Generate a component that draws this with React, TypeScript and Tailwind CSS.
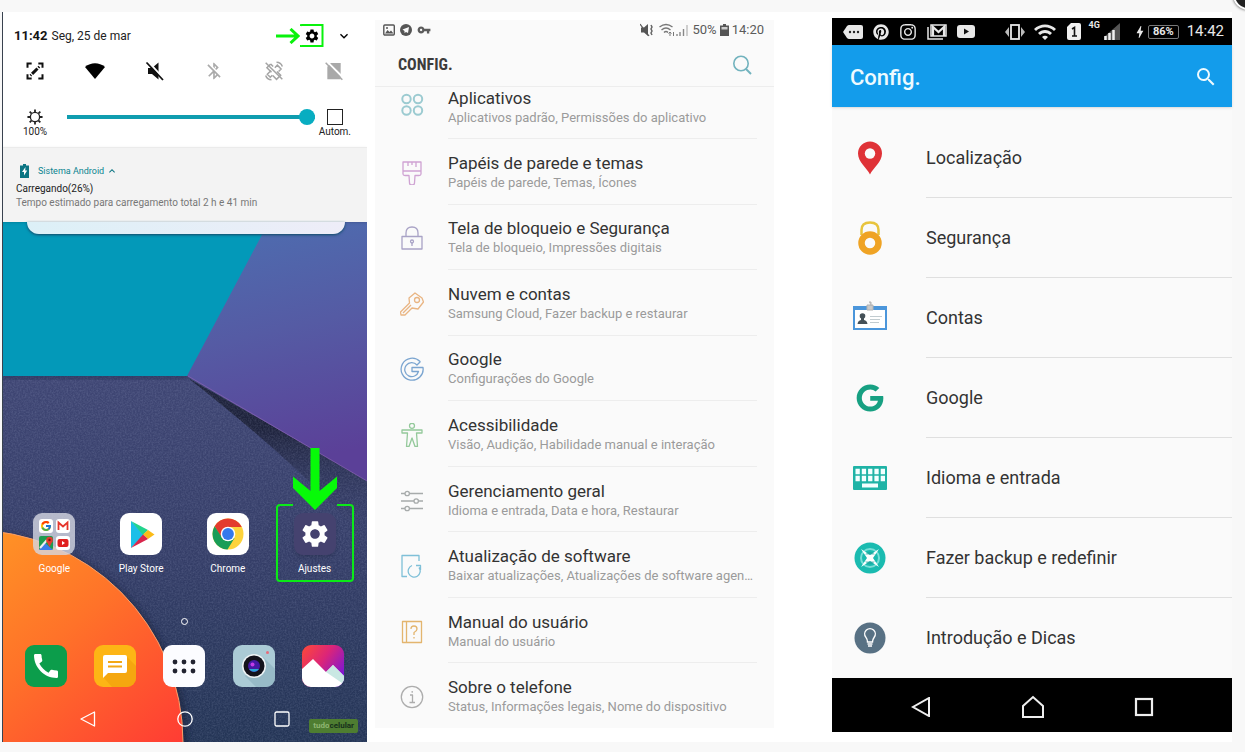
import type { ReactNode } from "react";
import { FcGoogle } from "react-icons/fc";
import { FaGoogle, FaPinterest, FaInstagram } from "react-icons/fa";
import {
  MdBluetoothDisabled,
  MdBolt,
  MdCall,
  MdExpandLess,
  MdExpandMore,
  MdSearch,
  MdSettings,
  MdVpnKey,
  MdWifi,
} from "react-icons/md";

/* ---------- Home screen with notification shade ---------- */

function Wallpaper() {
  return (
    <svg className="absolute inset-0 h-full w-full" viewBox="0 0 365 730" preserveAspectRatio="none" aria-hidden="true">
      <defs>
        <linearGradient id="navy" x1="0" y1="0" x2="0" y2="1">
          <stop offset="0.5" stopColor="#3f4674" />
          <stop offset="0.75" stopColor="#353e68" />
          <stop offset="1" stopColor="#243556" />
        </linearGradient>
        <linearGradient id="violet" x1="0" y1="0" x2="0.15" y2="1">
          <stop offset="0" stopColor="#4c70b2" />
          <stop offset="0.5" stopColor="#555ba4" />
          <stop offset="1" stopColor="#5b4098" />
        </linearGradient>
        <linearGradient id="fold" x1="0" y1="0.3" x2="0" y2="1">
          <stop offset="0" stopColor="#1e233c" />
          <stop offset="1" stopColor="#373f69" stopOpacity="0" />
        </linearGradient>
        <linearGradient id="sunset" x1="0.4" y1="0" x2="0.9" y2="0.6">
          <stop offset="0" stopColor="#ff9f24" />
          <stop offset="0.5" stopColor="#ff7229" />
          <stop offset="1" stopColor="#ff3a34" />
        </linearGradient>
        <filter id="grain" x="0" y="0" width="100%" height="100%">
          <feTurbulence type="fractalNoise" baseFrequency="0.6" numOctaves="2" seed="4" />
          <feColorMatrix values="0 0 0 0 0.65  0 0 0 0 0.72  0 0 0 0 0.95  0.9 0 0 0 -0.3" />
        </filter>
        <filter id="soft" x="-10%" y="-10%" width="120%" height="120%">
          <feGaussianBlur stdDeviation="3" />
        </filter>
      </defs>
      <rect width="365" height="730" fill="url(#navy)" />
      <path d="M186 366 L365 468 L365 530 Q300 455 186 366Z" fill="url(#fold)" />
      <rect y="364" width="365" height="366" filter="url(#grain)" opacity="0.28" />
      <rect y="361" width="186" height="6" fill="#1f2a50" opacity="0.6" filter="url(#soft)" />
      <path d="M0 200 H276 L186 364 H0Z" fill="#0399b9" />
      <path d="M272 200 H365 V469 L185 364Z" fill="url(#violet)" />
      <path d="M186 364 L365 469" stroke="#8a62b4" strokeWidth="1" opacity="0.7" />
      <circle cx="-28" cy="733" r="214" fill="#151c34" opacity="0.5" filter="url(#soft)" />
      <circle cx="-31" cy="730" r="212" fill="url(#sunset)" stroke="#f7a06a" strokeWidth="1" />
    </svg>
  );
}

function CaptureIcon() {
  return (
    <svg className="size-5" viewBox="0 0 24 24" fill="none" stroke="#111" strokeWidth="2.4">
      <path d="M3 8V3h5M16 3h5v5M21 16v5h-5M8 21H3v-5" />
      <path d="M8.5 15.5 15 9" strokeWidth="3.6" />
      <path d="M16 8l1.2-1.2M6.5 17.5l1-1" strokeWidth="3" />
    </svg>
  );
}

function WifiFan() {
  return (
    <svg className="size-5" viewBox="0 0 20 20">
      <path d="M0 6 C6 1 14 1 20 6 L10 18Z" fill="#000" />
    </svg>
  );
}

function SoundOff() {
  return (
    <svg className="size-5" viewBox="0 0 20 20">
      <path d="M3 7H7L13.500 1.500V18.500L7 13H3Z" fill="#111" />
      <path d="M3 0.500 20 19" stroke="#fff" strokeWidth="2" />
      <path d="M1.500 1.500 18 19" stroke="#111" strokeWidth="1.800" />
    </svg>
  );
}

function RotationOff() {
  return (
    <svg className="size-5" viewBox="0 0 24 24" fill="none" stroke="#a4a4a4" strokeWidth="1.8">
      <path d="M8 3.5 3.5 8 9 13.500M11 6.500 8 3.500M13 8l3-3 4.500 4.500-3 3M10.500 17.500 15 22l5-5-4.500-4.500M8.500 11.500 4 16l3.500 3.500 2.500-2.500" />
      <path d="M2 2l20 20M15 1.500c3.500 0 6 2 7 5M9 22.500c-3.500 0-6-2-7-5" />
    </svg>
  );
}

function SimOff() {
  return (
    <svg className="size-5" viewBox="0 0 24 24">
      <path d="M8 2.500H20V22H4V7Z" fill="#a9a9a9" />
      <path d="M4 1 24 21" stroke="#fff" strokeWidth="2.400" />
      <path d="M2 2 22 22.500" stroke="#a9a9a9" strokeWidth="1.800" />
    </svg>
  );
}

function SunIcon() {
  return (
    <svg className="size-4" viewBox="0 0 18 18" fill="none" stroke="#222" strokeWidth="1.500">
      <circle cx="9" cy="9" r="5.200" />
      <path d="M9 0.500v3M9 14.500v3M0.500 9h3M14.500 9h3M3 3l2 2M13 13l2 2M3 15l2-2M13 5l2-2" strokeWidth="2" />
    </svg>
  );
}

function NotificationShade() {
  return (
    <div className="relative">
      <div className="h-[135px] bg-white pt-3">
        <div className="flex h-6 items-center pr-[15px] pl-3">
          <span className="text-[13px] font-bold text-[#151515]">11:42</span>
          <span className="ml-1 text-xs text-[#222]">Seg, 25 de mar</span>
          <div className="ml-auto flex items-center">
            <svg className="h-4 w-6" viewBox="0 0 24 16" fill="none" stroke="#09f20c" strokeWidth="3">
              <path d="M0 8H22M14.500 1 22 8l-7.500 7" />
            </svg>
            <button type="button" aria-label="Ajustes" className="relative flex size-6 items-center justify-center text-black">
              <MdSettings className="size-4" />
              <svg className="absolute inset-0 size-6" viewBox="0 0 24 24" fill="none" stroke="#09f20c" strokeWidth="2">
                <path d="M0 2 Q0 1 2 1H22.500V22H2Q0 22.500 0 21" />
              </svg>
            </button>
            <button type="button" aria-label="Expandir" className="ml-3 text-black">
              <MdExpandMore className="size-4" />
            </button>
          </div>
        </div>
        <div className="mt-[13px] flex items-center justify-between px-[23px]">
          <button type="button" aria-label="Captura"><CaptureIcon /></button>
          <button type="button" aria-label="Wi-Fi"><WifiFan /></button>
          <button type="button" aria-label="Som"><SoundOff /></button>
          <button type="button" aria-label="Bluetooth"><MdBluetoothDisabled className="size-5 text-[#aaa]" /></button>
          <button type="button" aria-label="Rotação"><RotationOff /></button>
          <button type="button" aria-label="Dados móveis"><SimOff /></button>
        </div>
        <div className="mt-7 flex items-start pr-4 pl-[17px]">
          <div className="flex w-8 flex-col items-center gap-px">
            <SunIcon />
            <span className="text-[10px] leading-3 text-[#222]">100%</span>
          </div>
          <input
            type="range"
            aria-label="Brilho"
            defaultValue={100}
            className="mr-1 ml-4 h-4 min-w-0 flex-1 appearance-none bg-[linear-gradient(#0f9daf,#0f9daf)] bg-[length:100%_4px] bg-center bg-no-repeat [&::-webkit-slider-thumb]:size-4 [&::-webkit-slider-thumb]:appearance-none [&::-webkit-slider-thumb]:rounded-full [&::-webkit-slider-thumb]:bg-[#08adc1]"
          />
          <label className="flex flex-col items-center gap-px">
            <input type="checkbox" className="size-4 appearance-none border border-[#222] bg-white" />
            <span className="text-[10px] leading-3 text-[#222]">Autom.</span>
          </label>
        </div>
      </div>
      <div className="h-[75px] border-t border-[#ebebeb] bg-[#f3f3f3] pt-4 pl-[14px] shadow">
        <div className="flex items-center">
          <svg className="ml-1 h-[14px] w-[9px]" viewBox="0 0 9 14">
            <path d="M3 0h3v1.500h3V14H0V1.500h3Z" fill="#0b7583" />
            <path d="M5.500 3 2 8h2v3.500L7.200 6.500H5.200Z" fill="#fff" />
          </svg>
          <span className="ml-[9px] text-[9px] leading-[14px] text-[#0b8490]">Sistema Android</span>
          <MdExpandLess className="ml-0.5 size-3 text-[#0b7583]" />
        </div>
        <p className="mt-1 text-[10px] leading-[14px] text-[#222]">Carregando(26%)</p>
        <p className="text-[10px] leading-[14px] text-[#777]">Tempo estimado para carregamento total 2 h e 41 min</p>
      </div>
      <div className="mr-[22px] ml-[25px] h-3 rounded-b-[16px] bg-gradient-to-r from-[#dcf0f7] to-[#eeedf8] shadow-sm shadow-[#17506f]" />
    </div>
  );
}

function GoogleFolder() {
  return (
    <div className="grid size-[42px] grid-cols-2 place-items-center gap-[2px] rounded-[9px] bg-[#d5d7e2]/80 p-[5px]">
      <span className="flex size-[14px] items-center justify-center rounded-[3px] bg-white"><FcGoogle className="size-3" /></span>
      <span className="flex size-[14px] items-center justify-center rounded-[3px] bg-white">
        <svg className="size-3" viewBox="0 0 12 12" fill="none" stroke="#e5352b" strokeWidth="1.800"><path d="M1.500 10V2.500L6 6.500l4.500-4V10" /></svg>
      </span>
      <svg className="size-[14px]" viewBox="0 0 14 14">
        <rect width="14" height="14" rx="2" fill="#1e9b50" />
        <path d="M0 14 6 7l8 7Z" fill="#3a7bea" /><path d="M1 12 8 4" stroke="#eee" strokeWidth="2" />
        <circle cx="10.500" cy="4" r="3.300" fill="#e13c2f" /><path d="m7.500 5 3 6 3-6Z" fill="#e13c2f" /><circle cx="10.500" cy="4" r="1.200" fill="#7c1610" />
      </svg>
      <span className="flex size-[14px] items-center justify-center rounded-[3px] bg-white">
        <svg className="size-3" viewBox="0 0 12 12"><rect x="0.500" y="2" width="11" height="8" rx="2" fill="#e01f1f" /><path d="m5 4 3 2-3 2Z" fill="#fff" /></svg>
      </span>
    </div>
  );
}

function PlayIcon() {
  return (
    <svg className="size-[42px]" viewBox="0 0 42 42">
      <rect width="42" height="42" rx="9" fill="#fff" />
      <path d="M11 8 24 21.500 11 35Z" fill="#1cbfe8" />
      <path d="M11 8 28 17 23 22Z" fill="#22d48d" />
      <path d="M28 17 34.500 21.500 28 26 23 21.500Z" fill="#fbbb18" />
      <path d="M11 35 23 21.500 28 26Z" fill="#d9264c" />
    </svg>
  );
}

function ChromeIcon() {
  return (
    <svg className="size-[42px]" viewBox="0 0 42 42">
      <rect width="42" height="42" rx="9" fill="#fff" />
      <circle cx="21" cy="21" r="15.500" fill="#fdd33c" />
      <path d="M7.600 13.200A15.500 15.500 0 0 1 34.400 13.200L34.500 14H21L14.500 25Z" fill="#e33b2e" />
      <path d="M7.600 13.200A15.500 15.500 0 0 0 20.500 36.500L27.500 25 14.900 24.500Z" fill="#199d57" />
      <circle cx="21" cy="21" r="7.300" fill="#fff" />
      <circle cx="21" cy="21" r="5.900" fill="#3579ec" />
    </svg>
  );
}

function SettingsTile() {
  return (
    <span className="flex size-[42px] items-center justify-center rounded-[9px] bg-[#45426f] shadow-md">
      <MdSettings className="size-8 text-white" />
    </span>
  );
}

function AppShortcut({ label, children }: { label: string; children: ReactNode }) {
  return (
    <button type="button" className="flex flex-col items-center gap-[7px]">
      {children}
      <span className="text-[10px] leading-[14px] text-white">{label}</span>
    </button>
  );
}

function MessagesIcon() {
  return (
    <svg className="size-[42px]" viewBox="0 0 42 42">
      <rect width="42" height="42" rx="9" fill="#fdb515" />
      <path d="M33 12 42 21v12a9 9 0 0 1-9 9H18L9 32Z" fill="#f09f0c" opacity="0.6" />
      <path d="M11 10H31Q33 10 33 12V26Q33 28 31 28H14L9 33V12Q9 10 11 10Z" fill="#fff" />
      <path d="M14 17H28M14 21.500H28" stroke="#f3a814" strokeWidth="2" />
    </svg>
  );
}

function DrawerIcon() {
  return (
    <svg className="size-[42px]" viewBox="0 0 42 42">
      <rect width="42" height="42" rx="9" fill="#fcfcff" />
      <g fill="#222330">
        <circle cx="12" cy="17" r="2.400" /><circle cx="21" cy="17" r="2.400" /><circle cx="30" cy="17" r="2.400" />
        <circle cx="12" cy="26" r="2.400" /><circle cx="21" cy="26" r="2.400" /><circle cx="30" cy="26" r="2.400" />
      </g>
    </svg>
  );
}

function CameraIcon() {
  return (
    <svg className="size-[42px]" viewBox="0 0 42 42">
      <rect width="42" height="42" rx="9" fill="#abcbd6" />
      <path d="M30 12 42 24v9a9 9 0 0 1-9 9H23L12 31Z" fill="#8fb2c0" opacity="0.7" />
      <circle cx="21" cy="21" r="12" fill="#eef4f6" />
      <circle cx="21" cy="21" r="10.500" fill="#13131c" />
      <circle cx="21" cy="21" r="6" fill="#4518a4" />
      <path d="M16 24a6 6 0 0 0 10 0Z" fill="#2aa5d6" />
      <circle cx="19.500" cy="19.500" r="2" fill="#c23be8" />
      <circle cx="34.500" cy="7.500" r="1.500" fill="#e76b7b" />
    </svg>
  );
}

function GalleryIcon() {
  return (
    <svg className="size-[42px]" viewBox="0 0 42 42">
      <defs>
        <linearGradient id="galleryBg" x1="0" y1="0" x2="1" y2="0.700">
          <stop offset="0" stopColor="#ff4a36" /><stop offset="0.500" stopColor="#dc2578" /><stop offset="1" stopColor="#7a17d6" />
        </linearGradient>
      </defs>
      <rect width="42" height="42" rx="9" fill="url(#galleryBg)" />
      <path d="M0 24 11 14 24 27 31 20 42 31V33a9 9 0 0 1-9 9H9a9 9 0 0 1-9-9Z" fill="#fff" />
      <path d="M24 27 31 20 42 31V33q0 3-2 5Z" fill="#c9e8e3" />
    </svg>
  );
}

function HomeScreen() {
  return (
    <section className="relative flex min-w-0 flex-[365] flex-col overflow-hidden">
      <Wallpaper />
      <NotificationShade />
      <div className="relative mt-auto grid grid-cols-4 px-[9px]">
        <AppShortcut label="Google"><GoogleFolder /></AppShortcut>
        <AppShortcut label="Play Store"><PlayIcon /></AppShortcut>
        <AppShortcut label="Chrome"><ChromeIcon /></AppShortcut>
        <div className="relative flex justify-center">
          <AppShortcut label="Ajustes"><SettingsTile /></AppShortcut>
          <svg className="pointer-events-none absolute -top-[65px] left-1/2 h-[134px] w-[78px] -translate-x-1/2" viewBox="0 0 78 134">
            <path d="M34.500 0h9V43L61 28.500V40L39 62 17 40V28.500L34.500 43Z" fill="#07fa08" />
            <path d="M17 57H4Q1 57 1 60V130Q1 133 4 133H74Q77 133 77 130V60Q77 57 74 57H61" fill="none" stroke="#0bea17" strokeWidth="2" />
          </svg>
        </div>
      </div>
      <div className="relative mt-[42px] flex justify-center">
        <span className="size-[7px] rounded-full border border-white" />
      </div>
      <div className="relative mt-5 grid grid-cols-5 place-items-center px-[9px]">
        <button type="button" aria-label="Telefone" className="flex size-[42px] items-center justify-center rounded-[9px] bg-[#0c9d4b]">
          <MdCall className="size-8 text-white" />
        </button>
        <button type="button" aria-label="Mensagens"><MessagesIcon /></button>
        <button type="button" aria-label="Aplicativos"><DrawerIcon /></button>
        <button type="button" aria-label="Câmera"><CameraIcon /></button>
        <button type="button" aria-label="Galeria"><GalleryIcon /></button>
      </div>
      <nav className="relative mt-6 mb-[15px] grid grid-cols-3 place-items-center px-[37px]">
        <button type="button" aria-label="Voltar">
          <svg className="size-4" viewBox="0 0 16 16" fill="none" stroke="#fff" strokeWidth="1.300" strokeLinejoin="round"><path d="M14.500 1V15L1 8Z" /></svg>
        </button>
        <button type="button" aria-label="Início">
          <svg className="size-4" viewBox="0 0 16 16" fill="none" stroke="#fff" strokeWidth="1.300"><circle cx="8" cy="8" r="7.200" /></svg>
        </button>
        <button type="button" aria-label="Recentes">
          <svg className="size-4" viewBox="0 0 16 16" fill="none" stroke="#fff" strokeWidth="1.300"><rect x="1" y="1" width="14" height="14" rx="1.500" /></svg>
        </button>
      </nav>
      <div className="absolute right-[9px] bottom-[9px] rounded-xs bg-[#4e7d31] px-1 text-[8px] leading-[14px] font-bold text-[#16301b]">
        <span className="text-[#90b673]">tudo</span>celular
      </div>
      <div className="absolute inset-y-0 left-0 w-px bg-[#39424f]" />
    </section>
  );
}

/* ---------- Light settings list ---------- */

function LineIcon({ color, children }: { color: string; children: ReactNode }) {
  return (
    <svg className="size-6 shrink-0" viewBox="0 0 24 24" fill="none" stroke={color} strokeWidth="1.300" strokeLinejoin="round">
      {children}
    </svg>
  );
}

const lightRows: { title: string; detail: string; icon: ReactNode }[] = [
  {
    title: "Papéis de parede e temas",
    detail: "Papéis de parede, Temas, Ícones",
    icon: (
      <LineIcon color="#cfa3d3">
        <path d="M3 1H21V13Q21 14.500 19 14.500H15L14.500 22Q14.500 24 12 24T9.500 22L9 14.500H5Q3 14.500 3 13ZM3 10H21M8 1V5M12 1V4M16 1V6" />
      </LineIcon>
    ),
  },
  {
    title: "Tela de bloqueio e Segurança",
    detail: "Tela de bloqueio, Impressões digitais",
    icon: (
      <LineIcon color="#a9a3c6">
        <path d="M2 10.500H22V23H2ZM6 10V7Q6 1 12 1T18 7V10M12 16V20" />
        <circle cx="12" cy="15.500" r="1.500" />
      </LineIcon>
    ),
  },
  {
    title: "Nuvem e contas",
    detail: "Samsung Cloud, Fazer backup e restaurar",
    icon: (
      <LineIcon color="#e9b583">
        <path d="M15 1 22 6 23.500 10 18 17 12 16 5 23H1L0.500 20 9.500 11 9 6ZM3 21 11 13" />
        <circle cx="17" cy="8" r="2.500" />
      </LineIcon>
    ),
  },
  {
    title: "Google",
    detail: "Configurações do Google",
    icon: (
      <LineIcon color="#7ba5d0">
        <path d="M20 5 17 8A7 7 0 1 0 18.500 14.500H12V10.500H23A11 11 0 1 1 20 4.500Z" />
      </LineIcon>
    ),
  },
  {
    title: "Acessibilidade",
    detail: "Visão, Audição, Habilidade manual e interação",
    icon: (
      <LineIcon color="#94c99b">
        <circle cx="12" cy="2.800" r="2.500" />
        <path d="M2 7H22V10H16.500L17.500 23.500H15L12 15 9 23.500H6.500L7.500 10H2Z" />
      </LineIcon>
    ),
  },
  {
    title: "Gerenciamento geral",
    detail: "Idioma e entrada, Data e hora, Restaurar",
    icon: (
      <LineIcon color="#a7abab">
        <path d="M1 4.500H5M9.500 4.500H23M1 12H14M18.500 12H23M1 19.500H5M9.500 19.500H23" />
        <circle cx="7.200" cy="4.500" r="2.200" />
        <circle cx="16.200" cy="12" r="2.200" />
        <circle cx="7.200" cy="19.500" r="2.200" />
      </LineIcon>
    ),
  },
  {
    title: "Atualização de software",
    detail: "Baixar atualizações, Atualizações de software agendadas",
    icon: (
      <LineIcon color="#7fc0d8">
        <path d="M19 7V1.500H2V22.500H7" />
        <path d="M12 11.500A6 6 0 1 0 19 13.500M16 11.500H20.500V16" />
      </LineIcon>
    ),
  },
  {
    title: "Manual do usuário",
    detail: "Manual do usuário",
    icon: (
      <LineIcon color="#e3b56e">
        <path d="M2.500 1.500H21.500V22.500H2.500ZM6.500 1.500V22.500" />
        <path d="M11 9Q11 6 14 6T17 9Q17 11 14 12.500V15M14 17V18.500" />
      </LineIcon>
    ),
  },
  {
    title: "Sobre o telefone",
    detail: "Status, Informações legais, Nome do dispositivo",
    icon: (
      <LineIcon color="#adadad">
        <circle cx="12" cy="12" r="10.700" />
        <path d="M10 10H12.500V17.500M9.500 17.500H15M12.200 6V7.800" />
      </LineIcon>
    ),
  },
];

function RowText({ title, detail }: { title: string; detail: string }) {
  return (
    <span className="min-w-0 flex-1">
      <span className="block text-[17px] leading-[22px] text-[#333]">{title}</span>
      <span className="block truncate text-[13px] leading-[17px] text-[#9b9b9b]">{detail}</span>
    </span>
  );
}

function LightSettings() {
  return (
    <section className="mt-2 mb-[14px] ml-2 flex min-w-0 flex-[399] flex-col bg-[#fafafa]">
      <div className="flex h-5 items-center pr-[10px] pl-2 text-[#5b5b5b]">
        <svg className="size-3" viewBox="0 0 12 12"><rect x="0.800" y="1" width="10.500" height="10" rx="1" fill="none" stroke="#555" strokeWidth="1.400" /><path d="M2 9.500 4.500 6 6.500 8 8 6.500 10.500 9.500Z" fill="#555" /><circle cx="4" cy="4" r="1" fill="#555" /></svg>
        <svg className="ml-[5px] size-3" viewBox="0 0 12 12"><circle cx="6" cy="6" r="6" fill="#555" /><path d="M2.500 5.500 9 3 8 9 6 8 4.500 9V7Z" fill="#fafafa" /></svg>
        <MdVpnKey className="ml-[5px] size-[14px]" />
        <div className="ml-auto flex items-center text-[13px]">
          <svg className="size-[14px]" viewBox="0 0 14 14"><path d="M1 4.500H4L8 1V13L4 9.500H1Z" fill="#555" /><path d="M0 1 9 13" stroke="#555" strokeWidth="1.200" /><path d="M11 2 12 4 11 6 12 8 11 10 12 12" stroke="#666" strokeWidth="1.500" fill="none" /></svg>
          <svg className="ml-[5px] h-[14px] w-4" viewBox="0 0 16 14" fill="none" stroke="#777" strokeWidth="1.400"><path d="M0.500 4Q7 -1 13.500 4M2.500 7Q7 3 11.500 7M5 9.500Q7 7.500 9 9.500" /><path d="M11 13V9M9.500 10.500 11 9l1.500 1.500M14.500 9v4" strokeWidth="1" /></svg>
          <svg className="ml-px size-3" viewBox="0 0 12 12" stroke="#888"><path d="M1 12V10M4 12V8M7.500 12V5" strokeWidth="1.400" /><path d="M11 12V1" stroke="#bbb" strokeWidth="1.400" /></svg>
          <span className="ml-1">50%</span>
          <svg className="mx-[3px] h-3 w-[9px]" viewBox="0 0 9 12"><path d="M3 0H6V1.500H9V12H0V1.500H3Z" fill="#555" /><rect x="1.500" y="3" width="6" height="2.500" fill="#ccc" /></svg>
          <time>14:20</time>
        </div>
      </div>
      <header className="flex h-[47px] items-center justify-between border-b border-[#ededed] pt-1 pr-[22px] pl-[23px]">
        <h1 className="font-['Roboto_Condensed','Liberation_Sans_Narrow',Roboto,sans-serif] text-[16px] font-bold text-[#3c3c3c]">CONFIG.</h1>
        <button type="button" aria-label="Pesquisar">
          <svg className="size-5" viewBox="0 0 20 20" fill="none" stroke="#72b3be" strokeWidth="1.600"><circle cx="9" cy="8.500" r="7.200" /><path d="m14 14 5 5" strokeWidth="2" /></svg>
        </button>
      </header>
      <button type="button" className="flex h-[51px] shrink-0 text-left">
        <span className="flex w-[73px] justify-center pt-[6px]">
          <LineIcon color="#9ccbd1">
            <circle cx="6.500" cy="6" r="4.200" strokeWidth="2" /><circle cx="18" cy="6" r="4.200" strokeWidth="2" />
            <circle cx="6.500" cy="17.500" r="4.200" strokeWidth="2" /><circle cx="18" cy="17.500" r="4.200" strokeWidth="2" />
          </LineIcon>
        </span>
        <RowText title="Aplicativos" detail="Aplicativos padrão, Permissões do aplicativo" />
      </button>
      <ul className="grid flex-1 auto-rows-fr grid-cols-1">
        {lightRows.map((row) => (
          <li key={row.title}>
            <button type="button" className="flex h-full w-full items-center text-left">
              <span className="flex w-[73px] shrink-0 justify-center pt-1">{row.icon}</span>
              <span className="mr-[17px] flex h-full min-w-0 flex-1 items-center border-t border-[#ededed]">
                <RowText title={row.title} detail={row.detail} />
              </span>
            </button>
          </li>
        ))}
      </ul>
    </section>
  );
}

/* ---------- Blue settings list ---------- */

const blueRows: { title: string; icon: ReactNode }[] = [
  {
    title: "Localização",
    icon: (
      <svg className="size-[34px]" viewBox="0 0 34 34">
        <path d="M17 0.500A12 12 0 0 0 5 12.500C5 21 14 27 17 33.500C20 27 29 21 29 12.500A12 12 0 0 0 17 0.500Z" fill="#df3237" />
        <circle cx="17" cy="12.500" r="5.200" fill="#fafafa" />
      </svg>
    ),
  },
  {
    title: "Segurança",
    icon: (
      <svg className="size-[34px]" viewBox="0 0 34 34">
        <path d="M8.500 14V9Q8.500 1.500 17 1.500T25.500 9V14" fill="none" stroke="#e8c43d" strokeWidth="2.500" />
        <circle cx="17" cy="22" r="8.500" fill="none" stroke="#efa324" strokeWidth="6.500" />
      </svg>
    ),
  },
  {
    title: "Contas",
    icon: (
      <svg className="size-[34px]" viewBox="0 0 34 34">
        <rect x="1" y="6" width="32" height="22" fill="#fff" stroke="#4b96db" strokeWidth="2" />
        <path d="M0 5H34V9H0Z" fill="#4b96db" />
        <path d="M14 4H20V9H14ZM16 1H18V5" fill="#c9c9c9" stroke="#b2b2b2" />
        <circle cx="9.500" cy="15" r="2.800" fill="#455158" />
        <path d="M4.500 23Q5 19.500 8 19V16H11V19Q14 19.500 14.500 23Z" fill="#455158" />
        <path d="M17 15.500H29M17 18.500H27M17 21.500H26" stroke="#c2ccd0" strokeWidth="1.200" />
      </svg>
    ),
  },
  {
    title: "Google",
    icon: <FaGoogle className="size-[28px] text-[#17a082]" />,
  },
  {
    title: "Idioma e entrada",
    icon: (
      <svg className="size-[34px]" viewBox="0 0 34 34">
        <rect y="5" width="34" height="24" rx="1" fill="#1fb3a6" />
        <path d="M2.500 10.500H32M2.500 17.500H32" stroke="#f4ffff" strokeWidth="5.400" strokeDasharray="4.300 2" />
        <rect x="9" y="22.500" width="16" height="4" fill="#f4ffff" />
      </svg>
    ),
  },
  {
    title: "Fazer backup e redefinir",
    icon: (
      <svg className="size-[34px]" viewBox="0 0 34 34">
        <circle cx="17" cy="17" r="15.500" fill="#1abbb0" />
        <circle cx="17" cy="17" r="9" fill="none" stroke="#79ded7" strokeWidth="2" />
        <path d="M8 8 17 14 26 8 20 17 26 26 17 20 8 26 14 17Z" fill="#fff" />
        <path d="M12 13.500Q17 8 22 13.500ZM12 20.500Q17 26 22 20.500Z" fill="#1a9e98" opacity="0.600" />
      </svg>
    ),
  },
  {
    title: "Introdução e Dicas",
    icon: (
      <svg className="size-[34px]" viewBox="0 0 34 34">
        <circle cx="17" cy="17" r="15.500" fill="#587184" />
        <path d="M14.500 21Q14.500 18.500 12.800 16.200A5.300 5.300 0 1 1 21.200 16.200Q19.500 18.500 19.500 21ZM14.500 23H19.500M15 25H19" fill="none" stroke="#fff" strokeWidth="1.400" />
      </svg>
    ),
  },
];

function BlueStatusBar() {
  return (
    <div className="flex h-[27px] shrink-0 items-center bg-black pr-2 pl-[11px] text-[#e8e8e8]">
      <div className="flex items-center gap-[10px]">
        <svg className="h-[14px] w-5" viewBox="0 0 20 14"><path d="M0 7 4 1Q5 0 6 0H18Q20 0 20 2V12Q20 14 18 14H6Q5 14 4 13Z" fill="#e8e8e8" /><g fill="#222"><circle cx="7" cy="7" r="1.200" /><circle cx="11" cy="7" r="1.200" /><circle cx="15" cy="7" r="1.200" /></g></svg>
        <FaPinterest className="size-4" />
        <FaInstagram className="size-[18px]" />
        <svg className="h-4 w-5" viewBox="0 0 20 16" fill="none" stroke="#e8e8e8"><path d="M1 3V15H16" strokeWidth="1.500" /><path d="M4 1H19V12H4Z" strokeWidth="1.500" /><path d="M6 12V3L11.500 8 17 3V12" strokeWidth="2.200" /></svg>
        <svg className="h-[13px] w-[18px]" viewBox="0 0 18 13"><rect width="18" height="13" rx="3" fill="#e8e8e8" /><path d="m7 3.500 5 3-5 3Z" fill="#111" /></svg>
      </div>
      <div className="ml-auto flex items-center">
        <svg className="h-4 w-5" viewBox="0 0 20 16"><rect x="6" y="1" width="8" height="14" fill="none" stroke="#e8e8e8" strokeWidth="1.800" /><path d="M4 3V13L0 8ZM16 3V13L20 8Z" fill="#bbb" /></svg>
        <MdWifi className="ml-2 size-6" />
        <svg className="ml-[10px] h-[17px] w-[14px]" viewBox="0 0 14 17"><path d="M4 0H12Q14 0 14 2V15Q14 17 12 17H2Q0 17 0 15V4Z" fill="#f0f0f0" /><path d="M5 6 7.500 4.500V13M5 13H10" stroke="#111" strokeWidth="1.600" fill="none" /></svg>
        <span className="ml-2 self-start text-[9px] leading-[10px] font-bold">4G</span>
        <svg className="ml-1 h-[17px] w-4" viewBox="0 0 16 17"><path d="M0 17V14L16 0V17Z" fill="#555" /><path d="M1.500 17V13M5.500 17V10M9.500 17V7" stroke="#f0f0f0" strokeWidth="2.500" /></svg>
        <MdBolt className="ml-3 size-4" />
        <span className="rounded-xs border border-[#777] px-1 text-[11px] leading-3 font-bold">86%</span>
        <time className="ml-2 text-[15px]">14:42</time>
      </div>
    </div>
  );
}

function BlueSettings() {
  return (
    <section className="mt-[6px] mb-[10px] ml-[58px] flex min-w-0 flex-[400] flex-col bg-[#fafafa]">
      <BlueStatusBar />
      <header className="flex h-[62px] shrink-0 items-center justify-between bg-[#139ceb] pt-0.5 pr-[14px] pl-[18px] text-[#eefaff] shadow-sm">
        <h1 className="text-[22px] font-medium">Config.</h1>
        <button type="button" aria-label="Pesquisar"><MdSearch className="size-6" /></button>
      </header>
      <ul className="grid flex-1 auto-rows-fr grid-cols-1 pt-[11px]">
        {blueRows.map((row, i) => (
          <li key={row.title}>
            <button type="button" className="flex h-full w-full items-center text-left">
              <span className="flex w-[94px] shrink-0 justify-center pr-[18px]">{row.icon}</span>
              <span
                className={
                  i < blueRows.length - 1
                    ? "flex h-full flex-1 items-center border-b border-[#dfdfdf] text-lg text-[#333]"
                    : "flex h-full flex-1 items-center text-lg text-[#333]"
                }
              >
                {row.title}
              </span>
            </button>
          </li>
        ))}
      </ul>
      <nav className="flex h-[54px] shrink-0 items-center justify-between bg-black pt-1 pr-[78px] pl-[79px]">
        <button type="button" aria-label="Voltar">
          <svg className="size-5" viewBox="0 0 20 20" fill="none" stroke="#eee" strokeWidth="2"><path d="M18 1V19L2 10Z" /></svg>
        </button>
        <button type="button" aria-label="Início">
          <svg className="h-6 w-6" viewBox="0 0 24 24" fill="none" stroke="#eee" strokeWidth="2"><path d="M2 22V11L12 2 22 11V22Z" /></svg>
        </button>
        <button type="button" aria-label="Recentes">
          <svg className="size-5" viewBox="0 0 20 20" fill="none" stroke="#eee" strokeWidth="2.200"><rect x="2" y="2" width="16" height="16" /></svg>
        </button>
      </nav>
    </section>
  );
}

export default function App() {
  return (
    <main className="relative min-h-screen overflow-hidden bg-[#f8f8f8] pt-3 pr-[13px] pb-[10px] pl-[2px] font-[Roboto,sans-serif]">
      <div className="flex min-h-[730px] bg-white">
        <HomeScreen />
        <LightSettings />
        <BlueSettings />
      </div>
      <button
        type="button"
        aria-label="Fechar"
        className="absolute -top-5 -right-[18px] size-[30px] rounded-full border-2 border-white bg-[#222] shadow-[0_0_3px_#444]"
      />
    </main>
  );
}
